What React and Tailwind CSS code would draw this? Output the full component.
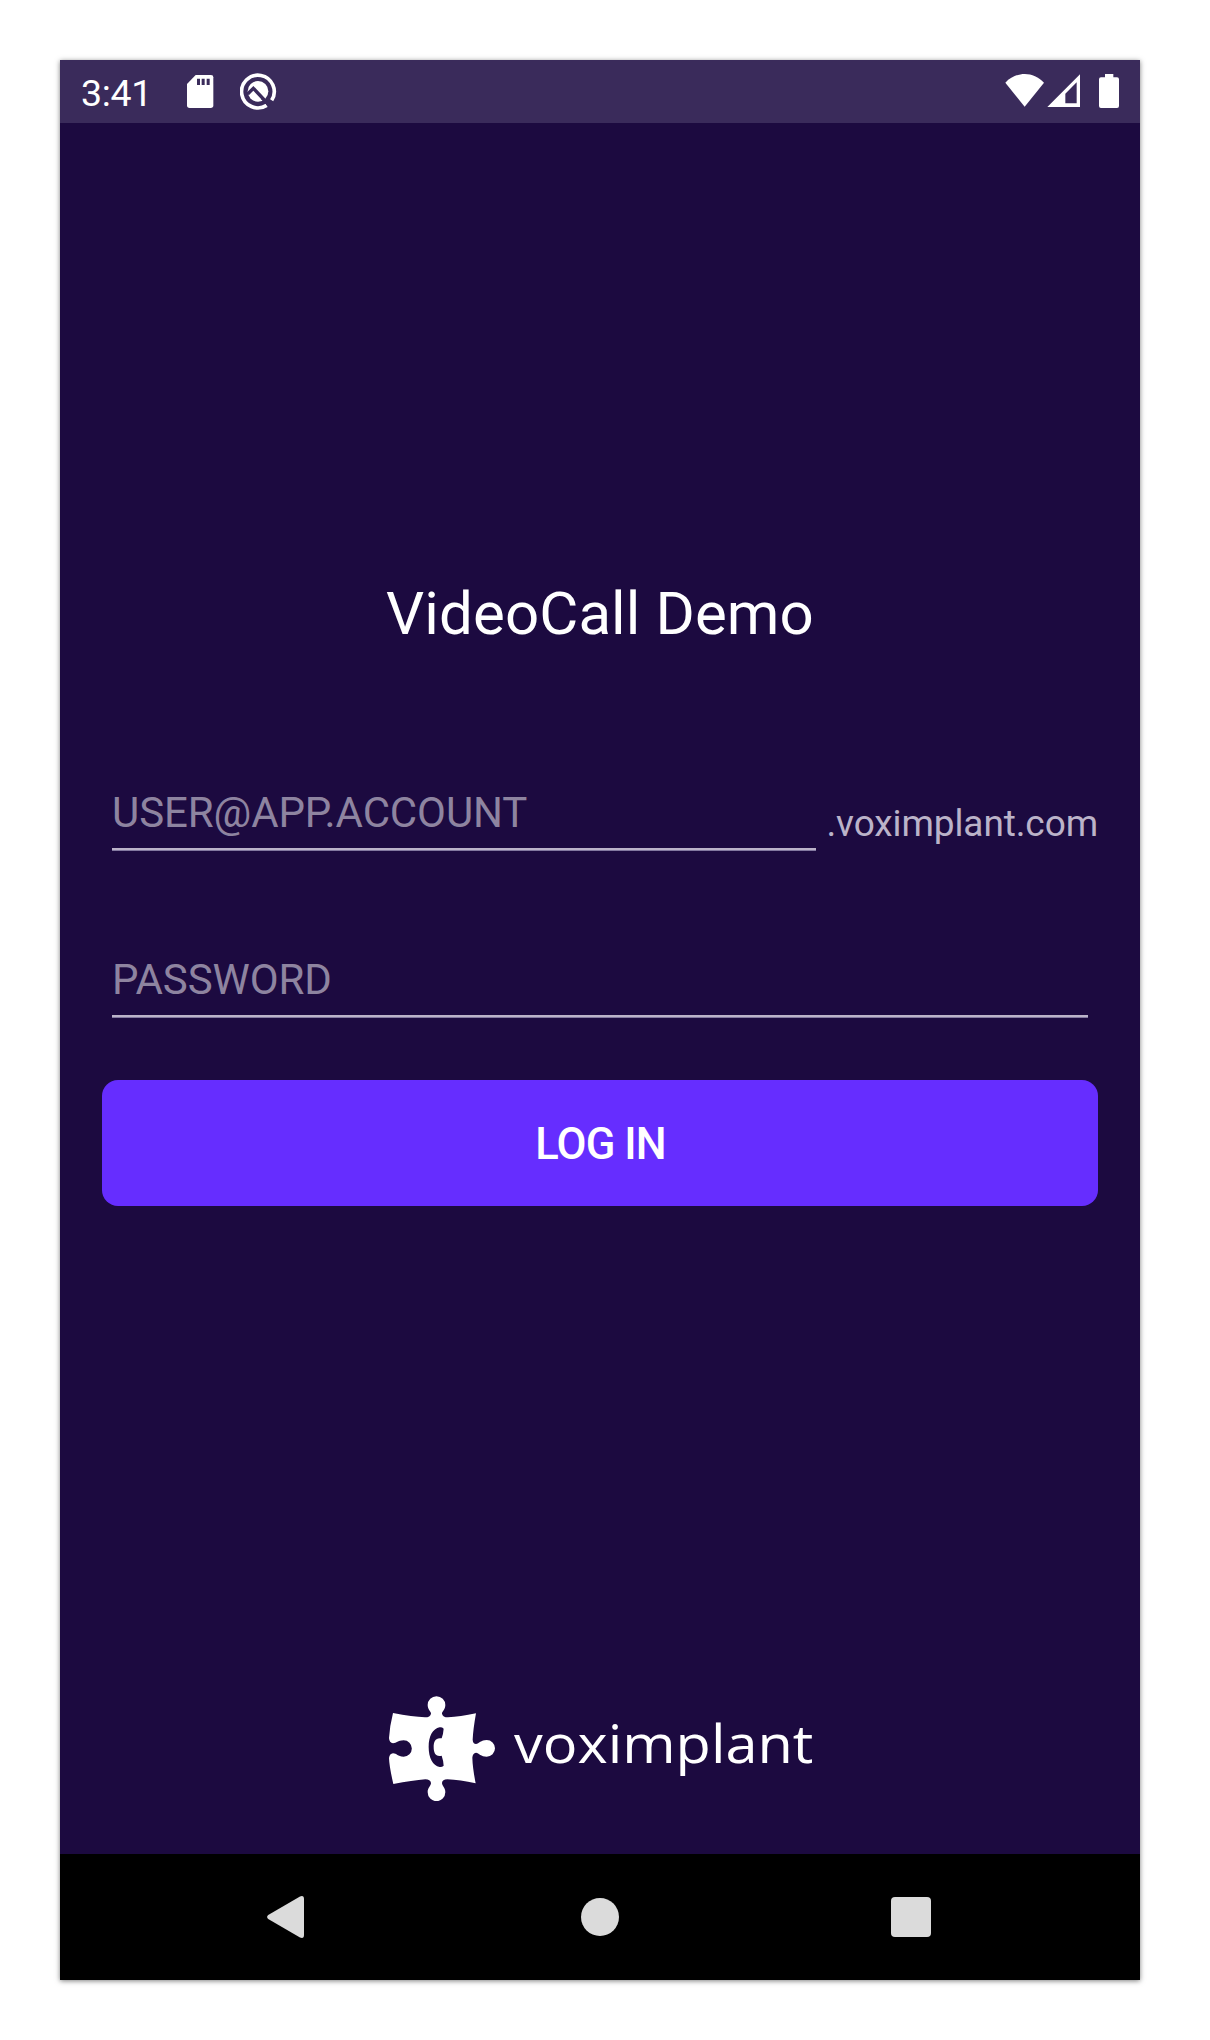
function StatusBar() {
  return (
    <div className="flex h-[63px] items-start justify-between bg-[#3a2b5b] pr-[21px] pl-[21px] text-white">
      <div className="flex items-start">
        <span className="mt-[12px] w-[105px] text-[37.5px] leading-[43px] tracking-[-0.3px]">3:41</span>
        <svg className="mt-[13px] h-[37px] w-[28px]" viewBox="408 69 84 111" fill="none">
          <path fill="currentColor" d="M437 75H483Q490 75 490 82V166Q490 174 482 174H419Q411 174 411 166V102Z" />
          <path fill="#3a2b5b" d="M441 86h9v19h-9zM455 86h9v19h-9zM470 86h9v19h-9z" />
        </svg>
        <svg className="mt-[13px] ml-[26px] h-[37px] w-[37px]" viewBox="570 69 111 111" fill="none">
          <path d="M650 166A49 49 0 1 1 665 151" stroke="currentColor" strokeWidth="11" />
          <circle cx="624" cy="124" r="31" fill="currentColor" />
          <path d="M593 132L610 115L660 168" stroke="#3a2b5b" strokeWidth="10" />
          <path d="M635 145L657 167" stroke="#3a2b5b" strokeWidth="6" />
        </svg>
      </div>
      <div className="flex items-start">
        <svg className="mt-[13px] h-[37px] w-[40px]" viewBox="75 69 120 111" fill="currentColor">
          <path d="M76 98C109 63 160 63 192 98L134 170Z" />
        </svg>
        <svg className="mt-[13px] ml-[2px] h-[37px] w-[33px]" viewBox="201 69 99 111" fill="currentColor">
          <path fillRule="evenodd" d="M300 73V171H202ZM290 97L256 131V160H290Z" />
        </svg>
        <svg className="mt-[13px] ml-[19px] h-[37px] w-[20px]" viewBox="357 69 60 111" fill="currentColor">
          <path d="M375 72H400V82H411Q417 82 417 88V168Q417 174 411 174H363Q357 174 357 168V88Q357 82 363 82H375Z" />
        </svg>
      </div>
    </div>
  );
}

function Field({ label, className }) {
  return (
    <div className={className}>
      <div className="h-[60px] text-[42px] leading-[50px] tracking-[-0.1px] whitespace-nowrap text-[#8e84a0]">{label}</div>
      <div className="h-[3px] border-b border-[#8379a0] bg-[#bbb3c9]" />
    </div>
  );
}

function Brand() {
  return (
    <div className="flex items-start text-white">
      <svg className="h-[105px] w-[107px]" viewBox="57 47 321 315">
        <path
          fill="currentColor"
          d="M69 98Q128 109 165 111Q181 111 183 100C183 93 173 88 173 74A26.500 26.500 0 0 1 226 74C226 88 216 93 216 100Q218 111 234 111Q270 109 318 99Q309 150 308 178Q309 191 318 191C327 190 333 179 350 179A25 25 0 0 1 350 229C333 229 327 218 318 217Q308 218 307 232Q308 264 317 309Q270 299 232 297Q217 297 216 308C216 317 226 321 226 336A26.500 26.500 0 0 1 173 336C173 321 183 317 183 308Q181 297 166 297Q128 300 70 311Q58 260 57 233Q59 220 69 219C81 219 82 229 101 229A24.500 24.500 0 0 0 101 180C82 180 81 189 69 189Q58 188 57 173Q59 138 69 98Z"
        />
        <path
          fill="#1c0a40"
          d="M221 145Q216 140 209 141C188 145 176 168 176 200S188 256 209 260Q216 261 221 256Q220 240 215 226C197 230 191 218 191 200S197 171 215 174Q220 160 221 145Z"
        />
      </svg>
      <span className="mt-[11px] ml-[18px] w-[300px] origin-left scale-x-[1.088] font-['Open_Sans'] text-[53px] leading-[72px]">
        voximplant
      </span>
    </div>
  );
}

function NavBar() {
  return (
    <div className="flex h-[126px] items-center justify-between bg-black pr-[209px] pl-[207px] text-[#dbdbdb]">
      <svg className="h-[42px] w-[37px]" viewBox="0 0 37 42" fill="currentColor">
        <path d="M33 0.500Q37 -1 37 3V39Q37 43 33 41.500L1.200 23Q-1 21 1.200 19Z" />
      </svg>
      <div className="ml-[5px] h-[38px] w-[38px] rounded-full bg-[#dbdbdb]" />
      <div className="h-[40px] w-[40px] rounded-[4px] bg-[#dbdbdb]" />
    </div>
  );
}

export default function App() {
  return (
    <div className="h-[2040px] w-[1210px] bg-white p-[60px] font-[Roboto,sans-serif]">
      <div className="flex h-[1920px] w-[1080px] flex-col bg-[#1c0a40] shadow-[0_1px_5px_rgba(0,0,0,0.5)]">
        <StatusBar />
        <main className="flex flex-1 flex-col items-center px-[42px]">
          <h1 className="mt-[456px] text-[60px] leading-[70px] tracking-[0.1px] text-white">VideoCall Demo</h1>
          <div className="mt-[139px] flex w-full items-start justify-between pl-[10px]">
            <Field label="USER@APP.ACCOUNT" className="w-[704px]" />
            <span className="mt-[13px] text-[37px] leading-[46px] tracking-[-0.1px] text-[#bbb3c9]">.voximplant.com</span>
          </div>
          <div className="mt-[104px] w-full px-[10px]">
            <Field label="PASSWORD" />
          </div>
          <button className="mt-[62px] h-[126px] w-full rounded-[16px] bg-[#662dff] pt-[4px] pl-[1px] text-[43.5px] font-medium tracking-[-0.9px] text-white">
            LOG IN
          </button>
          <div className="mt-[490px] self-start pl-[287px]">
            <Brand />
          </div>
        </main>
        <NavBar />
      </div>
    </div>
  );
}
